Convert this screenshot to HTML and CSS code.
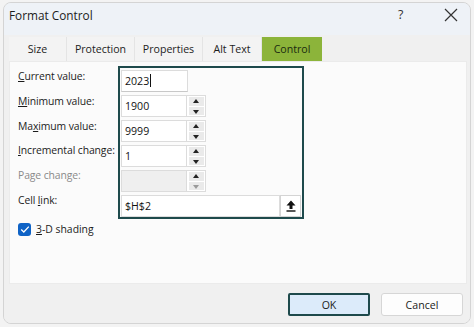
FILE: index.html
```html
<!DOCTYPE html>
<html>
<head>
<meta charset="utf-8">
<link rel="stylesheet" href="styles.css">
</head>
<body>
<div class="window">
  <div class="titlebar">
    <span class="title">Format Control</span>
    <span class="help">?</span>
    <span class="close"><svg width="14" height="14" viewBox="0 0 14 14"><path d="M1 1 L13 13 M13 1 L1 13" stroke="#333" stroke-width="1.2" fill="none"/></svg></span>
  </div>
  <div class="body">
    <div class="tabs">
      <div class="tab t-size">Size</div>
      <div class="tab t-prot">Protection</div>
      <div class="tab t-prop">Properties</div>
      <div class="tab t-alt">Alt Text</div>
      <div class="tab t-ctrl active">Control</div>
    </div>
    <div class="panel">
      <div class="grid">
        <div class="labels">
          <div class="lab"><u>C</u>urrent value:</div>
          <div class="lab"><u>M</u>inimum value:</div>
          <div class="lab">Ma<u>x</u>imum value:</div>
          <div class="lab"><u>I</u>ncremental change:</div>
          <div class="lab dis">Page change:</div>
          <div class="lab">Cell <u>l</u>ink:</div>
        </div>
        <div class="hl">
          <div class="row"><div class="inp short">2023<span class="caret"></span></div></div>
          <div class="row"><div class="inp spin">1900</div><div class="spinner"><span class="up"></span><span class="dn"></span></div></div>
          <div class="row"><div class="inp spin">9999</div><div class="spinner"><span class="up"></span><span class="dn"></span></div></div>
          <div class="row"><div class="inp spin">1</div><div class="spinner"><span class="up"></span><span class="dn"></span></div></div>
          <div class="row"><div class="inp spin disabled"></div><div class="spinner"><span class="up"></span><span class="dn faded"></span></div></div>
          <div class="row link"><div class="inp wide">$H$2</div><div class="pick"><svg width="10" height="12" viewBox="0 0 10 12"><path d="M5 0.5 L9.5 5.5 L6.5 5.5 L6.5 9 L3.5 9 L3.5 5.5 L0.5 5.5 Z" fill="#111"/><rect x="0.5" y="10.3" width="9" height="1.4" fill="#111"/></svg></div></div>
        </div>
      </div>
      <div class="check">
        <span class="box"><svg width="10" height="9" viewBox="0 0 10 9"><path d="M1.2 4.6 L3.8 7 L8.8 1.6" stroke="#fff" stroke-width="1.3" fill="none"/></svg></span>
        <span><u>3</u>-D shading</span>
      </div>
    </div>
    <div class="footer">
      <div class="btn ok">OK</div>
      <div class="btn">Cancel</div>
    </div>
  </div>
</div>
</body>
</html>
```
FILE: styles.css
```css
html, body { margin: 0; padding: 0; }
body {
  width: 474px; height: 327px; overflow: hidden;
  background: #f3f3f3;
  font-family: "Open Sans", "Noto Sans", sans-serif;
  font-size: 10.4px; color: #1b1b1b;
}
.window {
  margin: 2px 3px 0 3px;
  height: 322px;
  border: 1px solid #d4d4d4;
  border-radius: 8px;
  background: #f0f0f0;
  box-sizing: border-box;
  overflow: hidden;
  display: flex; flex-direction: column;
}
.titlebar {
  height: 32px; flex: none;
  background: #eef2f7;
  display: flex; align-items: center;
  padding: 0 0 0 5px;
}
.title { font-size: 11.8px; color: #1c1c1c; flex: 1; margin-top: -9px; }
.help { font-size: 12.5px; color: #333; width: 14px; margin-right: 32px; margin-top: -9px; }
.close { width: 14px; height: 14px; margin-right: 12px; margin-top: -8px; }
.close svg { display: block; }
.body { flex: 1; display: flex; flex-direction: column; padding: 2px 3px 0 5px; background: #f0f0f0; }
.tabs { display: flex; height: 24px; flex: none; }
.tab {
  display: flex; align-items: center; justify-content: center;
  background: #f3f3f3; border-right: 1px solid #e4e4e4;
  font-size: 10.6px; color: #1d1d1d; box-sizing: border-box;
}
.t-size { width: 58px; }
.t-prot { width: 68px; }
.t-prop { width: 68px; }
.t-alt { width: 59px; }
.t-ctrl { width: 60px; }
.tab.active { background: #8cb43a; border-right: none; color: #1b2b10; }
.panel {
  height: 223px; flex: none;
  background: #fbfbfb;
  border: 1px solid #ebebeb;
  box-sizing: border-box;
  padding: 4px 0 0 8px;
}
.grid { display: flex; }
.labels { width: 100px; padding-top: 3px; }
.lab { height: 24.8px; line-height: 15px; color: #1b1b1b; white-space: nowrap; letter-spacing: -0.1px; }
.lab.dis { color: #8a8a8a; }
.hl {
  width: 186px; height: 153px; box-sizing: border-box;
  border: 2px solid #1e4a4c;
  padding: 2px 1px 0 1px;
  display: flex; flex-direction: column; gap: 3px;
}
.row { display: flex; height: 22px; }
.inp {
  box-sizing: border-box; height: 22px;
  background: #fff; border: 1px solid #dcdcdc;
  padding: 0 3px; line-height: 20px; font-size: 10.6px; color: #111;
}
.short { width: 67px; border-bottom-color: #c8c8c8; }
.short .caret { display: inline-block; width: 1px; height: 13px; background: #111; vertical-align: -2px; margin-left: 1px; }
.spin { width: 66px; }
.disabled { background: #efefef; }
.spinner {
  width: 19px; height: 22px; box-sizing: border-box;
  border: 1px solid #dcdcdc; border-left: none; background: #fff;
  display: flex; flex-direction: column; align-items: center; justify-content: center; gap: 1px;
  padding: 1px;
}
.spinner span { display: block; width: 15px; height: 9px; background: #eaeaea; position: relative; }
.spinner .up::after, .spinner .dn::after {
  content: ""; position: absolute; left: 4px; border-left: 3.5px solid transparent; border-right: 3.5px solid transparent;
}
.spinner .up::after { top: 2px; border-bottom: 4px solid #222; }
.spinner .dn::after { top: 3px; border-top: 4px solid #222; }
.spinner .dn.faded::after { border-top-color: #9a9a9a; }
.link { height: 22px; }
.wide { width: 160px; }
.pick {
  width: 21px; height: 22px; box-sizing: border-box;
  border: 1px solid #d4d4d4; background: #fff;
  display: flex; align-items: center; justify-content: center;
}
.pick svg { display: block; }
.check { display: flex; align-items: center; gap: 5px; margin-top: 3px; }
.box {
  width: 13px; height: 13px; border-radius: 3px; background: #0f63c6;
  display: flex; align-items: center; justify-content: center;
}
.box svg { display: block; }
.footer {
  flex: 1; display: flex; justify-content: flex-end; align-items: flex-start;
  padding: 9px 4px 0 0; gap: 11px;
}
.btn {
  width: 82px; height: 23px; box-sizing: border-box;
  background: #fdfdfd; border: 1px solid #d6d6d6; border-radius: 3px;
  display: flex; align-items: center; justify-content: center;
  font-size: 10.6px; color: #1b1b1b;
}
.btn.ok { background: #dcebfa; border: 2px solid #1e4a4c; border-radius: 2px; }
```
